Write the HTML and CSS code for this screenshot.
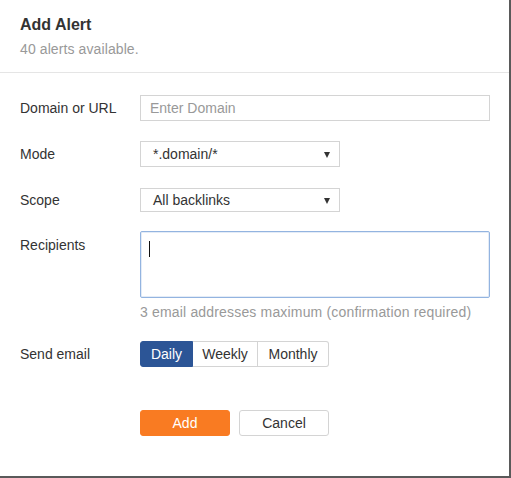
FILE: index.html
```html
<!DOCTYPE html>
<html>
<head>
<meta charset="utf-8">
<link rel="stylesheet" href="styles.css">
</head>
<body>
<div class="dialog">
  <div class="header">
    <h1 class="title">Add Alert</h1>
    <div class="subtitle">40 alerts available.</div>
  </div>
  <div class="form">
    <div class="row row-domain">
      <label class="label">Domain or URL</label>
      <div class="input placeholder">Enter Domain</div>
    </div>
    <div class="row row-mode">
      <label class="label">Mode</label>
      <div class="select select-mode">*.domain/*<span class="arrow"></span></div>
    </div>
    <div class="row row-scope">
      <label class="label">Scope</label>
      <div class="select select-scope">All backlinks<span class="arrow"></span></div>
    </div>
    <div class="row row-recipients">
      <label class="label label-top">Recipients</label>
      <div class="field">
        <div class="textarea"><span class="caret"></span></div>
        <div class="help">3 email addresses maximum (confirmation required)</div>
      </div>
    </div>
    <div class="row row-send">
      <label class="label">Send email</label>
      <div class="btn-group">
        <span class="seg seg-active seg-daily">Daily</span>
        <span class="seg seg-weekly">Weekly</span>
        <span class="seg seg-monthly">Monthly</span>
      </div>
    </div>
    <div class="row row-actions">
      <span class="label"></span>
      <div class="actions">
        <span class="btn btn-primary">Add</span>
        <span class="btn btn-default">Cancel</span>
      </div>
    </div>
  </div>
</div>
</body>
</html>
```
FILE: styles.css
```css
html, body {
  margin: 0;
  padding: 0;
  background: #fff;
}
body {
  font-family: "Liberation Sans", Arial, sans-serif;
  font-size: 14px;
  color: #333;
}
.dialog {
  width: 509px;
  height: 476px;
  border-right: 2px solid #5a5a5a;
  border-bottom: 2px solid #5a5a5a;
  background: #fff;
}
.header {
  padding: 16px 20px 0 20px;
  height: 56px;
  border-bottom: 1px solid #e5e5e5;
}
.title {
  margin: 0;
  font-size: 16px;
  font-weight: bold;
  line-height: 18px;
  color: #333;
}
.subtitle {
  margin-top: 7px;
  font-size: 14px;
  line-height: 16px;
  color: #999;
  letter-spacing: 0.1px;
}
.form {
  padding: 22px 19px 0 20px;
}
.row {
  display: flex;
  align-items: center;
}
.label {
  width: 120px;
  flex: none;
  color: #333;
  line-height: 16px;
}
.row-mode { margin-top: 20px; }
.row-scope { margin-top: 21px; }
.row-recipients { margin-top: 19px; align-items: flex-start; }
.row-send { margin-top: 21px; }
.row-actions { margin-top: 43px; }
.label-top { padding-top: 6px; }

.input {
  box-sizing: border-box;
  width: 350px;
  height: 26px;
  border: 1px solid #d4d4d4;
  padding: 0 9px;
  line-height: 24px;
}
.placeholder { color: #999; }

.select {
  position: relative;
  box-sizing: border-box;
  width: 200px;
  border: 1px solid #d4d4d4;
  padding: 0 12px;
  color: #333;
}
.select-mode { height: 26px; line-height: 24px; }
.select-scope { height: 24px; line-height: 22px; }
.arrow {
  position: absolute;
  right: 9px;
  top: 50%;
  margin-top: -2px;
  width: 0;
  height: 0;
  border-left: 3.5px solid transparent;
  border-right: 3.5px solid transparent;
  border-top: 6px solid #333;
}

.field {
  width: 350px;
}
.textarea {
  position: relative;
  box-sizing: border-box;
  width: 350px;
  height: 67px;
  border: 1px solid #93b4e0;
  border-radius: 2px;
  box-shadow: inset 0 0 0 1px rgba(147, 180, 224, 0.25);
}
.caret {
  position: absolute;
  left: 8px;
  top: 9px;
  width: 1px;
  height: 16px;
  background: #111;
}
.help {
  margin-top: 6px;
  color: #999;
  line-height: 16px;
  letter-spacing: 0.17px;
}

.btn-group {
  display: flex;
  height: 26px;
}
.seg {
  box-sizing: border-box;
  height: 26px;
  line-height: 24px;
  border: 1px solid #d4d4d4;
  text-align: center;
  color: #333;
  background: #fff;
}
.seg + .seg { border-left: none; }
.seg-daily {
  width: 53px;
  background: #2c5596;
  border-color: #2c5596;
  color: #fff;
  border-radius: 3px 0 0 3px;
}
.seg-weekly { width: 65px; }
.seg-monthly { width: 71px; border-radius: 0 3px 3px 0; }

.actions {
  display: flex;
  gap: 9px;
}
.btn {
  box-sizing: border-box;
  width: 90px;
  height: 26px;
  line-height: 24px;
  text-align: center;
  border-radius: 3px;
  border: 1px solid #d4d4d4;
}
.btn-primary {
  background: #f97b22;
  border-color: #f97b22;
  color: #fff;
}
.btn-default {
  background: #fff;
  color: #333;
}
```
